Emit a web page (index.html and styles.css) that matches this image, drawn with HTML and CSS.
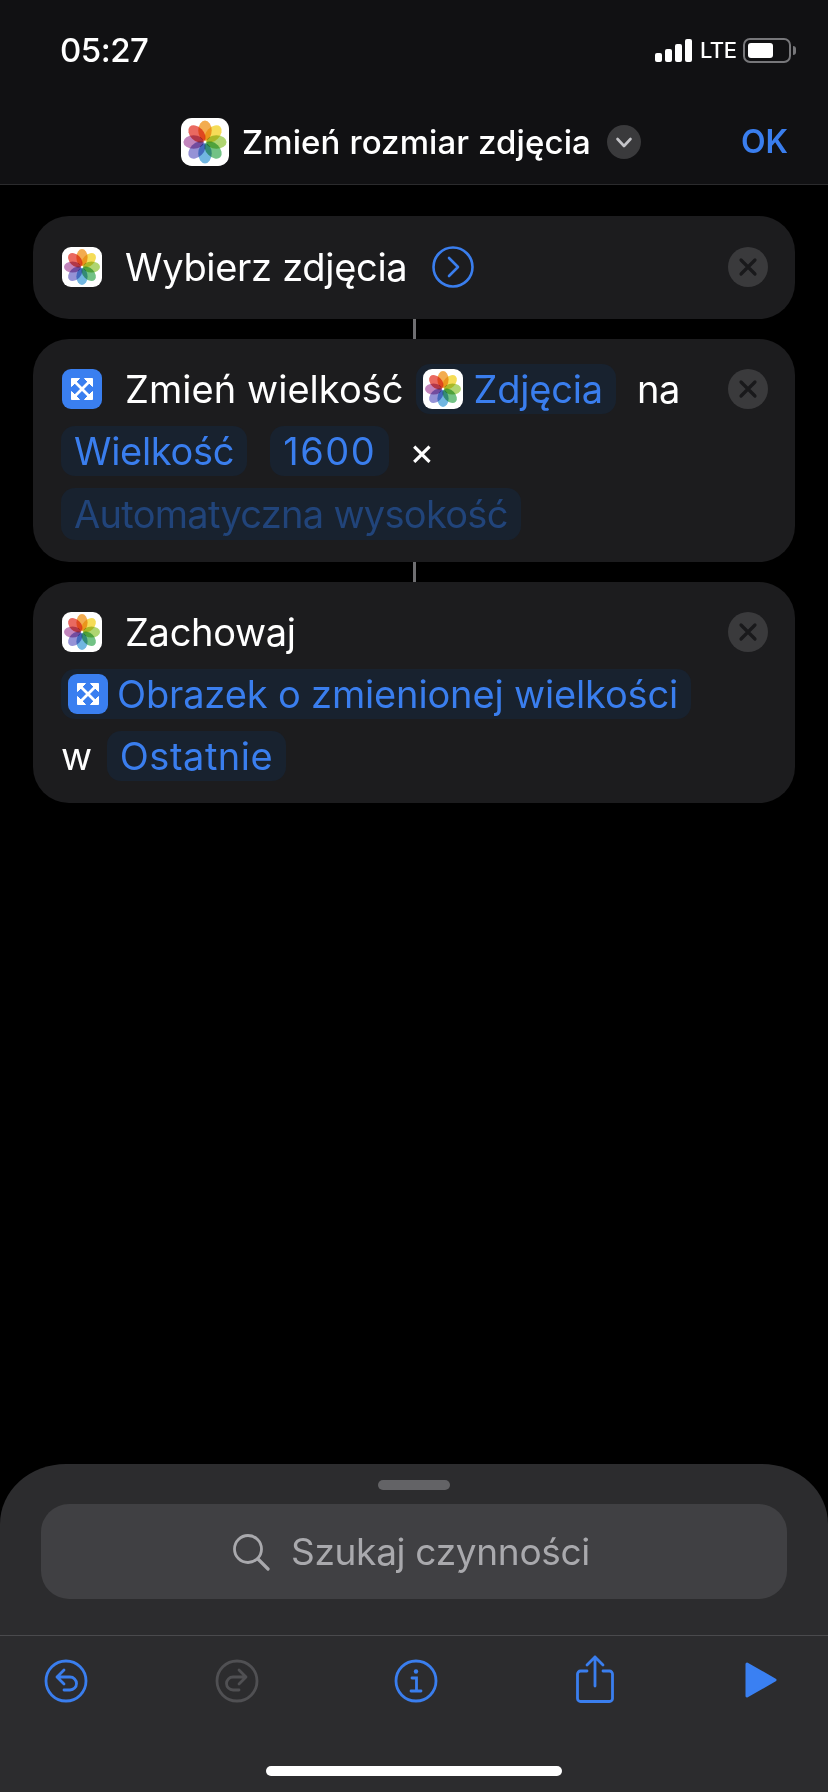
FILE: index.html
```html
<!DOCTYPE html>
<html lang="pl">
	<head>
		<meta charset="utf-8">
		<title>Zmień rozmiar zdjęcia</title>
		<link rel="stylesheet" href="styles.css">
	</head>
	<body>
		<!-- shared icons -->
		<svg class="defs" aria-hidden="true">
			<symbol id="photos" viewBox="0 0 40 40">
				<rect width="40" height="40" rx="9" fill="#fff"/>
				<g class="petals">
					<ellipse class="petal" cx="20" cy="10.500" rx="5.600" ry="8.500" fill="#f2a33c"/>
					<ellipse class="petal" cx="20" cy="10.500" rx="5.600" ry="8.500" fill="#f4d944" transform="rotate(45 20 20)"/>
					<ellipse class="petal" cx="20" cy="10.500" rx="5.600" ry="8.500" fill="#a6d161" transform="rotate(90 20 20)"/>
					<ellipse class="petal" cx="20" cy="10.500" rx="5.600" ry="8.500" fill="#63bb78" transform="rotate(135 20 20)"/>
					<ellipse class="petal" cx="20" cy="10.500" rx="5.600" ry="8.500" fill="#61aede" transform="rotate(180 20 20)"/>
					<ellipse class="petal" cx="20" cy="10.500" rx="5.600" ry="8.500" fill="#8a86d2" transform="rotate(225 20 20)"/>
					<ellipse class="petal" cx="20" cy="10.500" rx="5.600" ry="8.500" fill="#bb77b5" transform="rotate(270 20 20)"/>
					<ellipse class="petal" cx="20" cy="10.500" rx="5.600" ry="8.500" fill="#e8584e" transform="rotate(315 20 20)"/>
				</g>
			</symbol>
			<symbol id="resize" viewBox="0 0 40 40">
				<rect width="40" height="40" rx="9" fill="#3a7ff0"/>
				<path d="M12 12 28 28M28 12 12 28" stroke="#fff" stroke-width="2.800"/>
				<path d="M9.500 9.500h8l-8 8zM30.500 9.500v8l-8-8zM9.500 30.500v-8l8 8zM30.500 30.500h-8l8-8z" fill="#fff" stroke="#fff" stroke-width="1" stroke-linejoin="round"/>
			</symbol>
			<symbol id="close" viewBox="0 0 40 40">
				<circle cx="20" cy="20" r="20" fill="#3a3a3c"/>
				<path d="M13 13 27 27M27 13 13 27" stroke="#19191b" stroke-width="3.200" stroke-linecap="round"/>
			</symbol>
		</svg>

		<header class="topbar">
			<div class="status">
				<span class="time">05:27</span>
				<div class="status-right">
					<div class="signal"><i></i><i></i><i></i><i></i></div>
					<span class="lte">LTE</span>
					<div class="battery"><div class="battery-fill"></div></div>
					<div class="battery-nub"></div>
				</div>
			</div>
			<div class="nav">
				<svg class="nav-icon"><use href="#photos"/></svg>
				<span class="nav-title">Zmień rozmiar zdjęcia</span>
				<svg class="nav-chevron" viewBox="0 0 34 34">
					<circle cx="17" cy="17" r="17" fill="#3a3a3c"/>
					<path d="M10.500 14 17 21 23.500 14" fill="none" stroke="#c4c4c8" stroke-width="2.600" stroke-linecap="round" stroke-linejoin="round"/>
				</svg>
				<span class="nav-ok">OK</span>
			</div>
		</header>

		<main class="flow">
			<section class="card card-first">
				<div class="row">
					<svg class="icon icon-lead"><use href="#photos"/></svg>
					<span class="word">Wybierz zdjęcia</span>
					<svg class="more" viewBox="0 0 42 42">
						<circle cx="21" cy="21" r="19.500" fill="none" stroke="#3a7eee" stroke-width="2.600"/>
						<path d="M17 12 26 21 17 30" fill="none" stroke="#3a7eee" stroke-width="2.600" stroke-linecap="round" stroke-linejoin="round"/>
					</svg>
					<svg class="close"><use href="#close"/></svg>
				</div>
			</section>
			<div class="link"></div>
			<section class="card">
				<div class="row">
					<svg class="icon icon-lead"><use href="#resize"/></svg>
					<span class="word word-tight">Zmień wielkość</span>
					<span class="pill pill-icon pill-photos"><svg class="icon"><use href="#photos"/></svg>Zdjęcia</span>
					<span class="word word-na">na</span>
					<svg class="close"><use href="#close"/></svg>
				</div>
				<div class="row">
					<span class="pill">Wielkość</span>
					<span class="pill pill-num">1600</span>
					<span class="word word-times">×</span>
				</div>
				<div class="row row-tall">
					<span class="pill pill-dim">Automatyczna wysokość</span>
				</div>
			</section>
			<div class="link"></div>
			<section class="card">
				<div class="row">
					<svg class="icon icon-lead"><use href="#photos"/></svg>
					<span class="word">Zachowaj</span>
					<svg class="close"><use href="#close"/></svg>
				</div>
				<div class="row">
					<span class="pill pill-icon pill-long"><svg class="icon"><use href="#resize"/></svg>Obrazek o zmienionej wielkości</span>
				</div>
				<div class="row">
					<span class="word word-w">w</span>
					<span class="pill pill-recent">Ostatnie</span>
				</div>
			</section>
		</main>

		<footer class="sheet">
			<div class="handle"></div>
			<div class="search">
				<svg class="search-glass" viewBox="0 0 38 38">
					<circle cx="16" cy="16" r="13.500" fill="none" stroke="#a9a9ad" stroke-width="2.800"/>
					<path d="M26 26 36 36" stroke="#a9a9ad" stroke-width="3.200" stroke-linecap="round"/>
				</svg>
				<span>Szukaj czynności</span>
			</div>
			<div class="tools">
				<svg class="tool tool-undo" viewBox="0 0 44 44" fill="none" stroke="#3a7eee" stroke-width="2.800" stroke-linecap="round" stroke-linejoin="round">
					<circle cx="22" cy="22" r="20"/>
					<path d="M20 11 13 18 20 25M13 18H26A6.500 6.500 0 0 1 26 31H20"/>
				</svg>
				<svg class="tool tool-redo" viewBox="0 0 44 44" fill="none" stroke="#505053" stroke-width="2.800" stroke-linecap="round" stroke-linejoin="round">
					<circle cx="22" cy="22" r="20"/>
					<path d="M24 11 31 18 24 25M31 18H18A6.500 6.500 0 0 0 18 31H24"/>
				</svg>
				<svg class="tool tool-info" viewBox="0 0 44 44" fill="none" stroke="#3a7eee" stroke-width="2.800" stroke-linecap="round">
					<circle cx="22" cy="22" r="20"/>
					<circle cx="22" cy="12.500" r="2.200" fill="#3a7eee" stroke="none"/>
					<path d="M18 19H22.500V31M17 32H27"/>
				</svg>
				<svg class="tool tool-share" viewBox="0 0 38 48" fill="none" stroke="#3a7eee" stroke-width="2.800" stroke-linecap="round" stroke-linejoin="round">
					<path d="M11 16H4.500A3 3 0 0 0 1.500 19V43.500A3 3 0 0 0 4.500 46.500H33.500A3 3 0 0 0 36.500 43.500V19A3 3 0 0 0 33.500 16H27"/>
					<path d="M19 31V2M11 10 19 2 27 10"/>
				</svg>
				<svg class="tool tool-play" viewBox="0 0 32 36">
					<path d="M2 2 30 18 2 34Z" fill="#3a80f2" stroke="#3a80f2" stroke-width="3" stroke-linejoin="round"/>
				</svg>
			</div>
			<div class="home"></div>
		</footer>
	</body>
</html>
```

FILE: styles.css
```css
html, body {
	margin: 0;
	background: #000000;
}
body {
	width: 828px;
	height: 1792px;
	display: flex;
	flex-direction: column;
	overflow: hidden;
	font-family: Inter, "Liberation Sans", sans-serif;
	color: #ffffff;
}
.defs {
	width: 0;
	height: 0;
	display: block;
}
.petals {
	isolation: isolate;
}
.petal {
	mix-blend-mode: multiply;
	opacity: 0.9;
}

/* top bar */
.topbar {
	height: 184px;
	flex: none;
	background: #111113;
	border-bottom: 1px solid #2b2b2d;
}
.status {
	height: 100px;
	padding: 0 32px 0 60px;
	display: flex;
	align-items: center;
	justify-content: space-between;
}
.time {
	font-size: 33px;
	font-weight: 500;
	letter-spacing: -0.5px;
}
.status-right {
	display: flex;
	align-items: center;
}
.signal {
	display: flex;
	align-items: flex-end;
	gap: 3px;
	height: 23px;
	margin-right: 8px;
}
.signal i {
	width: 7px;
	background: #ffffff;
	border-radius: 2px;
}
.signal i:nth-child(1) { height: 9px; }
.signal i:nth-child(2) { height: 13px; }
.signal i:nth-child(3) { height: 18px; }
.signal i:nth-child(4) { height: 23px; }
.lte {
	font-size: 22px;
	font-weight: 500;
	letter-spacing: -0.5px;
	width: 43px;
}
.battery {
	width: 48px;
	height: 25px;
	box-sizing: border-box;
	padding: 3px;
	border: 2px solid #77777a;
	border-radius: 7px;
}
.battery-fill {
	width: 25px;
	height: 15px;
	background: #ffffff;
	border-radius: 3px;
}
.battery-nub {
	width: 3px;
	height: 9px;
	margin-left: 2px;
	background: #77777a;
	border-radius: 0 3px 3px 0;
}
.nav {
	height: 84px;
	padding: 0 40px 1px 181px;
	box-sizing: border-box;
	display: flex;
	align-items: center;
}
.nav-icon {
	width: 48px;
	height: 48px;
}
.nav-title {
	margin-left: 13px;
	font-size: 33px;
	font-weight: 500;
	letter-spacing: 0.1px;
}
.nav-chevron {
	width: 34px;
	height: 34px;
	margin-left: 16px;
}
.nav-ok {
	margin-left: auto;
	font-size: 32px;
	font-weight: 600;
	color: #3a7eee;
}

/* action cards */
.flow {
	flex: 1;
	padding: 31px 33px 0;
}
.card {
	padding: 25px 28px 22px;
	display: flex;
	flex-direction: column;
	gap: 12px;
	background: #1c1c1e;
	border-radius: 36px;
}
.card-first {
	padding: 26px 28px 27px;
}
.link {
	width: 3px;
	height: 20px;
	margin: 0 auto;
	background: #6f6f72;
}
.row {
	min-height: 50px;
	display: flex;
	align-items: center;
}
.row-tall {
	min-height: 52px;
}
.word, .pill {
	font-size: 38px;
	letter-spacing: -0.3px;
	white-space: nowrap;
}
.icon {
	width: 40px;
	height: 40px;
	flex: none;
}
.icon-lead {
	margin: 0 23px 0 1px;
}
.word-tight {
	margin-right: 12px;
	letter-spacing: 0.05px;
}
.word-na {
	margin-left: 21px;
}
.word-times {
	margin-left: 20px;
}
.word-w {
	margin-right: 15px;
}
.more {
	width: 42px;
	height: 42px;
	margin-left: 25px;
}
.close {
	width: 40px;
	height: 40px;
	margin-left: auto;
	margin-right: -1px;
	flex: none;
}
.pill {
	height: 50px;
	padding: 0 13px;
	display: flex;
	align-items: center;
	color: #3a7eee;
	background: #18222f;
	border-radius: 14px;
}
.pill-icon {
	padding-left: 7px;
	gap: 9px;
}
.pill-photos {
	gap: 11px;
	letter-spacing: -0.2px;
}
.pill-long {
	letter-spacing: -0.15px;
}
.pill-recent {
	letter-spacing: 0.5px;
}
.pill-num {
	margin-left: 23px;
	letter-spacing: 1.500px;
}
.pill-dim {
	height: 52px;
	letter-spacing: -0.7px;
	color: #21447a;
}

/* bottom sheet */
.sheet {
	height: 328px;
	flex: none;
	box-sizing: border-box;
	padding-top: 16px;
	background: #2c2c2e;
	border-radius: 66px 66px 0 0 / 60px 60px 0 0;
	display: flex;
	flex-direction: column;
	align-items: center;
}
.handle {
	width: 72px;
	height: 10px;
	background: #636366;
	border-radius: 5px;
}
.search {
	width: 746px;
	height: 95px;
	box-sizing: border-box;
	padding-right: 6px;
	margin-top: 14px;
	display: flex;
	align-items: center;
	justify-content: center;
	gap: 21px;
	background: #404043;
	border-radius: 28px;
	font-size: 37px;
	letter-spacing: -0.3px;
	color: #a9a9ad;
}
.search-glass {
	width: 38px;
	height: 38px;
}
.tools {
	width: 100%;
	height: 131px;
	margin-top: 36px;
	border-top: 1px solid #4a4a4d;
	box-sizing: border-box;
	padding: 19px 51px 0 44px;
	display: flex;
	align-items: flex-start;
}
.tool {
	flex: none;
}
.tool-undo, .tool-redo, .tool-info {
	width: 44px;
	height: 44px;
	margin-top: 4px;
}
.tool-redo {
	margin-left: 127px;
}
.tool-info {
	margin-left: 135px;
}
.tool-share {
	width: 38px;
	height: 48px;
	margin-left: 138px;
}
.tool-play {
	width: 32px;
	height: 36px;
	margin-top: 7px;
	margin-left: auto;
}
.home {
	width: 296px;
	height: 10px;
	background: #ffffff;
	border-radius: 5px;
}
```
